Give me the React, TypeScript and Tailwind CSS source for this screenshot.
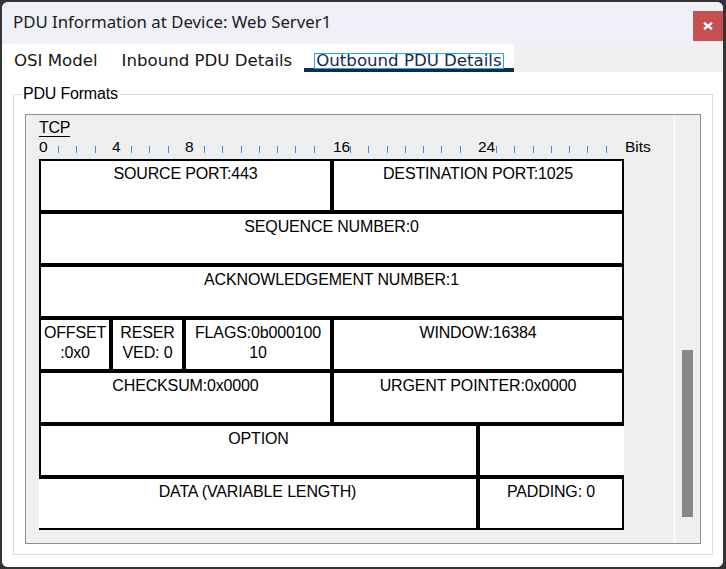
import React from "react";

const SANS = "font-['Liberation_Sans',Arial,sans-serif]";

type CellProps = {
  w: number;
  children?: React.ReactNode;
  cls?: string;
};

function Cell({ w, children, cls = "border-2" }: CellProps) {
  return (
    <div
      className={`h-full shrink-0 border-black bg-white pt-[3px] text-center text-[16px] leading-[20px] tracking-[-0.15px] text-black ${cls}`}
      style={{ width: w }}
    >
      {children}
    </div>
  );
}

function Row({ children }: { children: React.ReactNode }) {
  return <div className="flex h-[53px]">{children}</div>;
}

const labels = [
  { t: "0", x: 0 },
  { t: "4", x: 73 },
  { t: "8", x: 146 },
  { t: "16", x: 294 },
  { t: "24", x: 439 },
  { t: "Bits", x: 586 },
];

const ticks = Array.from({ length: 31 }, (_, k) => k + 1).filter(
  (i) => i !== 4 && i !== 8 && i !== 16 && i !== 24
);

function Ruler() {
  return (
    <div className="relative mt-0 h-[22px] w-[620px]">
      {labels.map((l) => (
        <span
          key={l.t}
          className="absolute top-[1px] text-[15.5px] leading-[18px] text-black"
          style={{ left: l.x }}
        >
          {l.t}
        </span>
      ))}
      {ticks.map((i) => (
        <span
          key={i}
          className="absolute top-[9px] h-[7px] w-px bg-[#3d8fe0]"
          style={{ left: Math.round(18.25 * i + 0.8) }}
        />
      ))}
    </div>
  );
}

function CloseIcon() {
  return (
    <svg width="10" height="8" viewBox="0 0 10 8">
      <path d="M1 0.8 L9 7.2 M9 0.8 L1 7.2" stroke="white" strokeWidth="2.3" />
    </svg>
  );
}

export default function App() {
  return (
    <div className="h-[569px] w-[726px] overflow-hidden bg-[#343434] pl-[2px] pt-[2px]">
      <div className="flex h-[565px] w-[721px] flex-col overflow-hidden rounded-[6px] bg-white">
        {/* Title bar */}
        <div className="flex h-[42px] shrink-0 items-start justify-between bg-[#eff0f8]">
          <div className="pl-[11px] pt-[8px] font-['Noto_Sans','Open_Sans',sans-serif] text-[16.8px] leading-[24px] text-[#1b1b1b]">
            PDU Information at Device: Web Server1
          </div>
          <div className="mt-[9px] flex h-[30px] w-[30px] items-center justify-center bg-[#c75050]">
            <CloseIcon />
          </div>
        </div>

        {/* Tabs */}
        <div className="flex h-[28px] shrink-0 bg-[#f0f0f0] font-['DejaVu_Sans',sans-serif] text-[16.6px]">
          <div className="h-[28px] bg-white px-[10px] pt-[5px] text-[#161616]">
            <span className="inline-block h-[16px] border border-transparent px-[1px] leading-[14px]">
              OSI Model
            </span>
          </div>
          <div className="h-[28px] bg-white px-[10px] pt-[5px] text-[#161616]">
            <span className="inline-block h-[16px] border border-transparent px-[1px] leading-[14px]">
              Inbound PDU Details
            </span>
          </div>
          <div className="h-[28px] border-b-4 border-[#0e2a4f] bg-white px-[10px] pt-[5px] text-[#10295a]">
            <span className="inline-block h-[16px] border border-[#2aa7df] px-[1px] leading-[14px]">
              Outbound PDU Details
            </span>
          </div>
        </div>

        {/* Content */}
        <div className={`flex-1 bg-white px-[11px] pt-[13px] ${SANS}`}>
          <fieldset className="h-[470px] border border-[#dcdcdc]">
            <legend className="ml-[8px] px-[1px] text-[16px] leading-[18px] tracking-[-0.2px] text-black">
              PDU Formats
            </legend>
            <div className="mx-[11px] mt-[11px] flex h-[430px] border border-[#8c9096] bg-[#efefef]">
              <div className="w-[648px] shrink-0 pl-[13px] pt-[4px]">
                <div className="text-[16px] leading-[18px] tracking-[-0.3px] text-black underline underline-offset-[3px]">
                  TCP
                </div>
                <Ruler />
                <div className="flex w-[585px] flex-col">
                  <Row>
                    <Cell w={293}>SOURCE PORT:443</Cell>
                    <Cell w={292}>DESTINATION PORT:1025</Cell>
                  </Row>
                  <Row>
                    <Cell w={585}>SEQUENCE NUMBER:0</Cell>
                  </Row>
                  <Row>
                    <Cell w={585}>ACKNOWLEDGEMENT NUMBER:1</Cell>
                  </Row>
                  <Row>
                    <Cell w={72}>
                      OFFSET
                      <br />
                      :0x0
                    </Cell>
                    <Cell w={73}>
                      RESER
                      <br />
                      VED: 0
                    </Cell>
                    <Cell w={148}>
                      FLAGS:0b000100
                      <br />
                      10
                    </Cell>
                    <Cell w={292}>WINDOW:16384</Cell>
                  </Row>
                  <Row>
                    <Cell w={293}>CHECKSUM:0x0000</Cell>
                    <Cell w={292}>URGENT POINTER:0x0000</Cell>
                  </Row>
                  <Row>
                    <Cell w={439}>OPTION</Cell>
                    <Cell w={146} cls="border-2 border-r-0" />
                  </Row>
                  <Row>
                    <Cell w={439} cls="border-2 border-l-0">
                      DATA (VARIABLE LENGTH)
                    </Cell>
                    <Cell w={146}>PADDING: 0</Cell>
                  </Row>
                </div>
              </div>
              <div className="w-px shrink-0 bg-white" />
              <div className="relative w-[25px] shrink-0">
                <div className="absolute left-[7px] top-[235px] h-[167px] w-[11px] bg-[#888888]" />
              </div>
            </div>
          </fieldset>
        </div>
      </div>
    </div>
  );
}
